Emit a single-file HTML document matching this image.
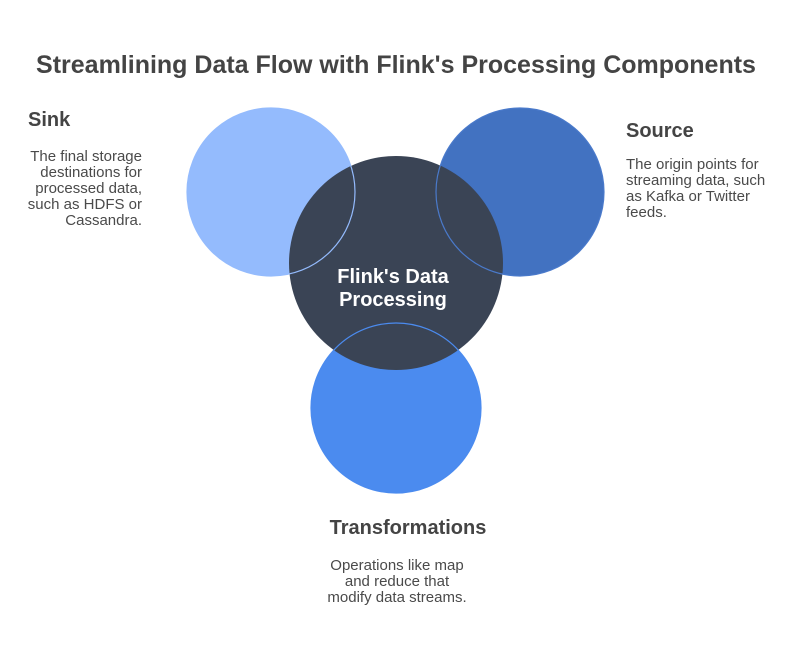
<!DOCTYPE html>
<html><head><style>
body{margin:0;background:#fff;width:804px;height:660px;position:relative;font-family:"Liberation Sans",sans-serif;overflow:hidden}
.t{position:absolute;color:#444;}
h1{position:absolute;margin:0;left:0;width:792px;top:51px;text-align:center;font-size:25px;font-weight:bold;color:#444}
.h{font-size:20px;font-weight:bold}
.p{font-size:15px;line-height:16px;color:#4a4a4a}
</style></head><body>
<h1>Streamlining Data Flow with Flink's Processing Components</h1>
<svg width="804" height="660" style="position:absolute;left:0;top:0">
<circle cx="271" cy="192" r="84" fill="#94bbfd"/>
<circle cx="520" cy="192" r="84" fill="#4272c1"/>
<circle cx="396" cy="408" r="85" fill="#4b8bef"/>
<circle cx="396" cy="263" r="107" fill="#3a4455"/>
<circle cx="271" cy="192" r="84" fill="none" stroke="#94bbfd" stroke-width="1.2"/>
<circle cx="520" cy="192" r="84" fill="none" stroke="#4a7acb" stroke-width="1.2"/>
<circle cx="396" cy="408" r="85" fill="none" stroke="#4b8bef" stroke-width="1.2"/>
<text x="393" y="283" text-anchor="middle" fill="#fff" font-size="20" font-weight="bold" font-family="Liberation Sans">Flink's Data</text>
<text x="393" y="306" text-anchor="middle" fill="#fff" font-size="20" font-weight="bold" font-family="Liberation Sans">Processing</text>
</svg>
<div class="t h" style="left:28px;top:109px">Sink</div>
<div class="t p" style="left:12px;top:149px;width:130px;text-align:right">The final storage destinations for processed data, such as HDFS or Cassandra.</div>
<div class="t h" style="left:626px;top:120px">Source</div>
<div class="t p" style="left:626px;top:157px;width:150px">The origin points for streaming data, such as Kafka or Twitter feeds.</div>
<div class="t h" style="left:0;width:816px;text-align:center;top:517px">Transformations</div>
<div class="t p" style="left:0;width:794px;text-align:center;top:558px">Operations like map<br>and reduce that<br>modify data streams.</div>
</body></html>
